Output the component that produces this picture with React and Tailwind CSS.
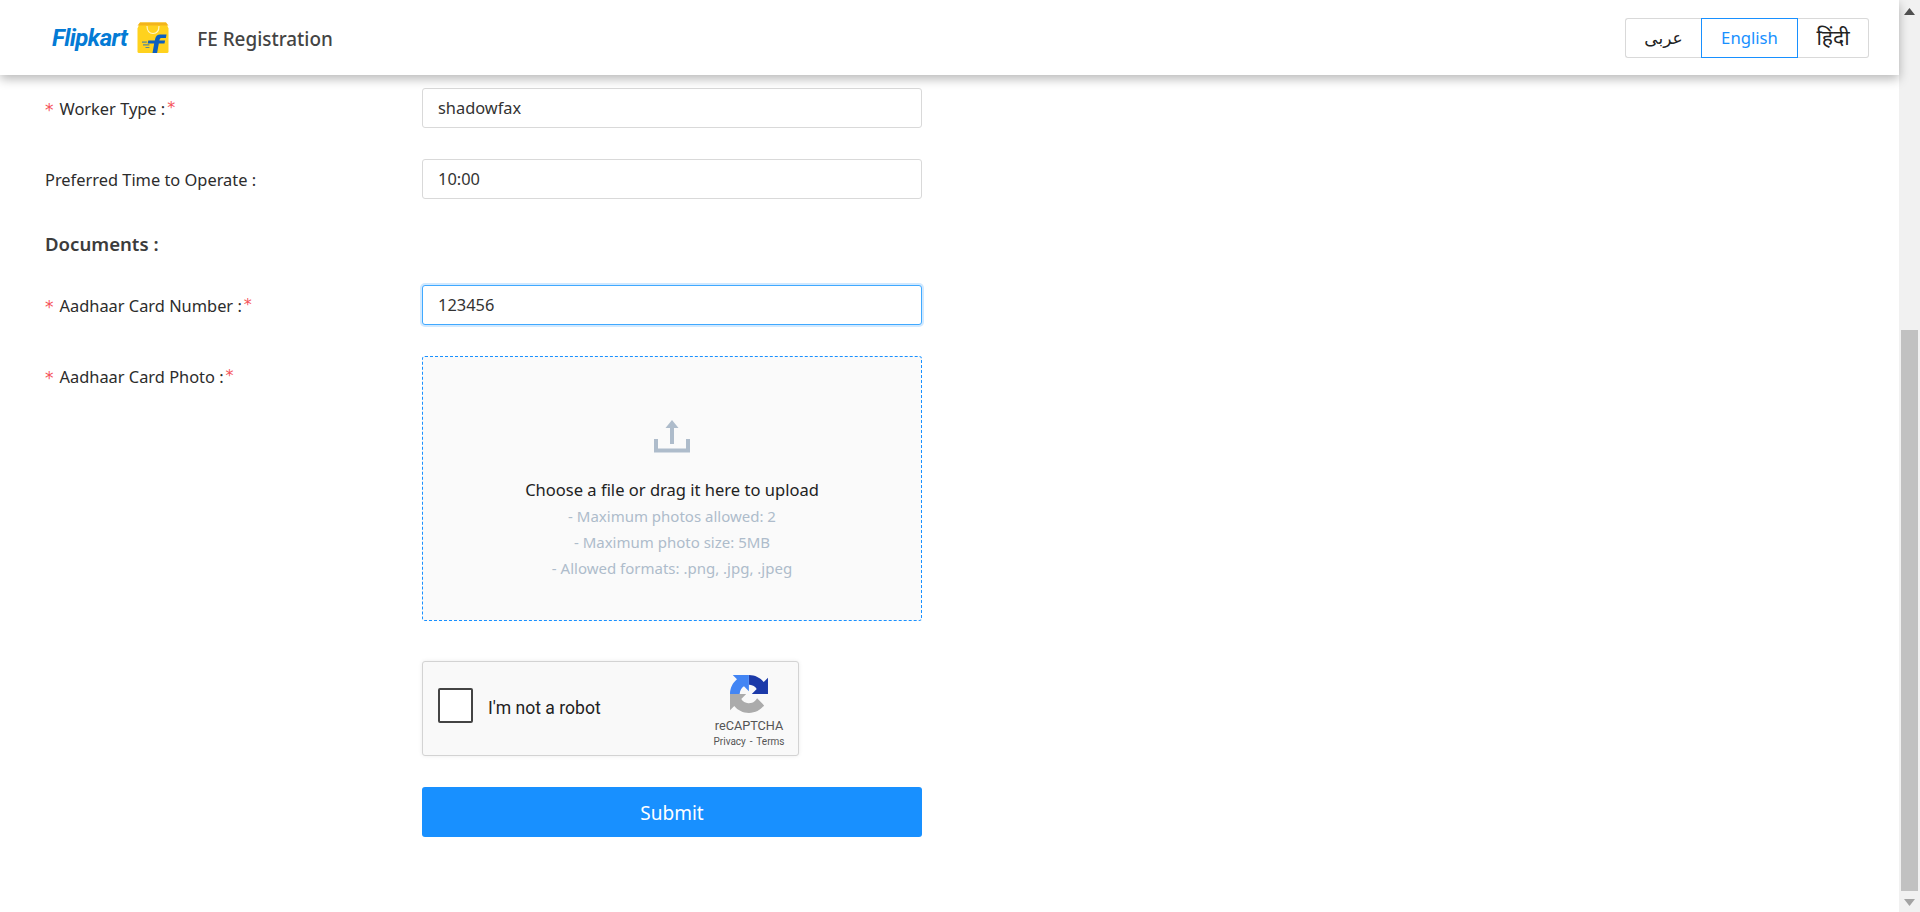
import React from "react";

function Label({ text, required }) {
  return (
    <div className="w-[377px] shrink-0 h-10 pt-[2px] flex items-center text-[16.400px] text-[#2c2c2c]">
      {required && <span className="mr-[6px] mt-[3px] text-[#f5535a] text-[17px] leading-none font-['DejaVu_Sans',sans-serif]">*</span>}
      <span>{text} :</span>
      {required && <span className="ml-[2px] -mt-[2px] text-[#f5535a] text-[16px] leading-none font-['DejaVu_Sans',sans-serif]">*</span>}
    </div>
  );
}

function Field({ label, required, value, focused }) {
  return (
    <div className="flex mb-[31px]">
      <Label text={label} required={required} />
      <div
        className={
          focused
            ? "w-[500px] h-10 px-[15px] flex items-center rounded-[3px] bg-white border border-[#40a9ff] shadow-[0_0_0_2px_rgba(24,144,255,0.2)] text-[16.400px] text-[#333]"
            : "w-[500px] h-10 px-[15px] flex items-center rounded-[3px] bg-white border border-[#d9d9d9] text-[16.400px] text-[#333]"
        }
      >
        {value}
      </div>
    </div>
  );
}

function Bag() {
  return (
    <svg width="32" height="32" viewBox="0 0 32 32" className="ml-[10px] -mt-[2px]">
      <path d="M3 1.500h26l2.500 6V30.500a1.500 1.500 0 0 1-1.500 1.500H2a1.500 1.500 0 0 1-1.500-1.500V7.500z" fill="#ffd21e" />
      <path d="M3 1.500h26l2.500 3H.5z" fill="#f3b41b" />
      <path d="M10 5c0 5 2.500 7.500 6 7.500s6-2.500 6-7.500" fill="none" stroke="#fff6c9" strokeWidth="1.200" />
      <path d="M15.500 32l1.700-9.500h-6.500l.6-3h6.500l.4-1.800c.5-2.600 2.400-4.200 5-4.200h6.300l-.6 3.400h-4.300c-1.100 0-1.800.5-2 1.600l-.2 1h5.700l-.6 3h-5.700l-1.700 9.500z" fill="#0b5fc0" />
      <path d="M5 20.500h5l-.3 1.200H5zM6 23.300h6.500l-.2 1.100H6zM8.500 26h4l-.2 1H8.500z" fill="#2b74b8" opacity="0.8" />
    </svg>
  );
}

function Recaptcha() {
  return (
    <svg width="38" height="38" viewBox="0 0 64 64">
      <path d="M64 31.955l-.033-1.37V4.687l-7.16 7.160C50.948 4.674 42.033.093 32.050.093v16.220c.485 0 .86.057 1.135.163 4.976.393 9.290 3.140 11.830 7.124l-8.307 8.307 26.290.008" fill="#1c3aa9" />
      <path d="M31.862.001l-1.370.033H4.594l7.160 7.160C4.580 13.053 0 21.968 0 31.950h16.260c0-.485.057-.86.163-1.135.393-4.976 3.140-9.290 7.124-11.830l8.307 8.307.008-26.290" fill="#4285f4" />
      <path d="M.001 31.958l.033 1.370v25.898l7.160-7.160c5.860 7.173 14.774 11.754 24.757 11.754 10.400 0 19.622-4.960 25.458-12.640l-11.736-11.860a15.550 15.550 0 0 1-4.754 5.334c-2.050 1.600-4.952 2.906-8.968 2.906-.485 0-.86-.057-1.135-.163-4.976-.393-9.290-3.140-11.830-7.124l8.307-8.307-26.290-.008" fill="#ababab" />
    </svg>
  );
}

export default function App() {
  return (
    <div className="h-[912px] w-[1920px] overflow-hidden flex bg-white font-['Noto_Sans',sans-serif]">
      <div className="flex-1 min-w-0 flex flex-col">
        <header className="relative z-10 h-[75px] shrink-0 bg-white shadow-[0_4px_10px_rgba(0,0,0,0.28)] flex items-center pl-[52px] pr-[30px]">
          <span className="text-[24px] font-bold italic tracking-[-0.6px] text-[#047bd5] font-['Roboto',sans-serif]">Flipkart</span>
          <Bag />
          <span className="ml-[28px] mt-[3px] text-[18.900px] font-medium text-[#444]">FE Registration</span>
          <div className="ml-auto flex h-10 text-[16.700px] text-[#222]">
            <div className="w-[76px] pt-[2px] flex items-center justify-center border border-[#d9d9d9] border-r-0 rounded-l-[3px] text-[17px] font-['DejaVu_Sans',sans-serif]">عربى</div>
            <div className="w-[97px] flex items-center justify-center border border-[#1890ff] text-[#1890ff]">English</div>
            <div className="w-[71px] flex items-center justify-center border border-[#d9d9d9] border-l-0 rounded-r-[3px] text-[21px]">हिंदी</div>
          </div>
        </header>
        <main className="pt-[13px] pl-[45px]">
          <Field label="Worker Type" required value="shadowfax" />
          <Field label="Preferred Time to Operate" value="10:00" />
          <div className="h-[24px] box-content pt-[2px] mb-[29px] text-[18.600px] font-semibold text-[#3c3c3c] flex items-center">Documents :</div>
          <Field label="Aadhaar Card Number" required value="123456" focused />
          <div className="flex mb-[40px]">
            <Label text="Aadhaar Card Photo" required />
            <div className="w-[500px] h-[265px] rounded-[3px] border border-dashed border-[#1890ff] bg-[#fafafa] flex flex-col items-center pt-[62px]">
              <svg width="36" height="34" viewBox="0 0 36 34" fill="none" stroke="#aebccb" strokeWidth="4">
                <path d="M18 25V5" />
                <path d="M18 1l-6.500 8h13z" fill="#aebccb" stroke="none" />
                <path d="M2 20v11.500h32V20" />
              </svg>
              <div className="mt-[24px] text-[16.550px] leading-[26px] text-[#222]">Choose a file or drag it here to upload</div>
              <div className="text-[15px] leading-[26px] text-[#aebccb] text-center">
                <div>- Maximum photos allowed: 2</div>
                <div>- Maximum photo size: 5MB</div>
                <div>- Allowed formats: .png, .jpg, .jpeg</div>
              </div>
            </div>
          </div>
          <div className="ml-[377px] w-[377px] h-[95px] mb-[31px] rounded-[3px] border border-[#d3d3d3] bg-[#f9f9f9] shadow-[0_0_4px_rgba(0,0,0,0.08)] flex items-center font-['Roboto',sans-serif]">
            <div className="ml-[15px] -mt-[6px] w-[35px] h-[35px] rounded-[2px] border-2 border-[#444] bg-white" />
            <div className="ml-[15px] text-[17.600px] text-[#222]">I'm not a robot</div>
            <div className="ml-auto mr-[14px] w-[70px] self-start mt-[13px] flex flex-col items-center">
              <Recaptcha />
              <div className="mt-[5px] text-[12.700px] leading-[16px] text-[#555]">reCAPTCHA</div>
              <div className="mt-[1px] text-[10px] leading-[14px] text-[#555] whitespace-nowrap [word-spacing:1.500px]">Privacy - Terms</div>
            </div>
          </div>
          <div className="ml-[377px] w-[500px] h-[50px] pt-[2px] rounded-[3px] bg-[#1890ff] text-white text-[19px] flex items-center justify-center">Submit</div>
        </main>
      </div>
      <div className="w-[21px] shrink-0 bg-[#f1f1f1] flex flex-col items-center">
        <svg width="11" height="7" viewBox="0 0 11 7" className="mt-[8px]"><path d="M5.500 0L11 7H0z" fill="#505050" /></svg>
        <div className="w-[17px] h-[561px] mt-[315px] bg-[#c1c1c1]" />
        <svg width="11" height="7" viewBox="0 0 11 7" className="mt-[8px]"><path d="M0 0h11L5.500 7z" fill="#a3a3a3" /></svg>
      </div>
    </div>
  );
}
